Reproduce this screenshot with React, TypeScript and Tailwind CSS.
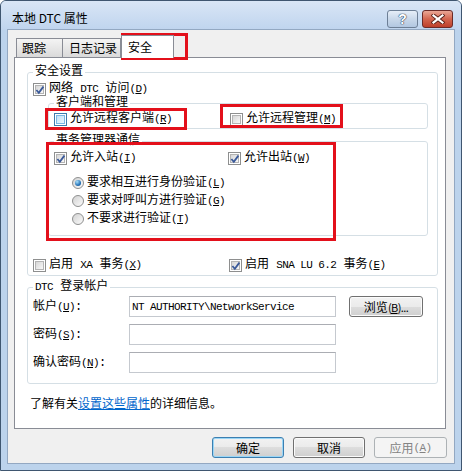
import type { ReactNode } from "react";

const sim = "font-['Liberation_Mono','Noto_Sans_CJK_SC',monospace] text-[12px] leading-[14px]";
const hei = "font-['Noto_Sans_CJK_SC','Liberation_Sans',sans-serif] text-[12px] leading-[14px]";

function M({ children }: { children: ReactNode }) {
  return <span className="text-[11px] tracking-[-0.6px]">{children}</span>;
}

function Key({ k }: { k: string }) {
  return (
    <span className="text-[11px] tracking-[-0.6px]">
      (<span className="underline underline-offset-1">{k}</span>)
    </span>
  );
}

function Box({ checked, hot }: { checked?: boolean; hot?: boolean }) {
  return (
    <span
      className={`relative flex h-[13px] w-[13px] shrink-0 items-center justify-center border bg-white ${
        hot ? "border-[#3d7bad]" : "border-[#8e8f8f]"
      }`}
    >
      <span
        className={`h-[9px] w-[9px] border ${
          hot
            ? "border-[#79b7e6] bg-gradient-to-br from-[#bfe2f8] to-[#eaf6fd]"
            : "border-[#b4b4b4] bg-gradient-to-br from-[#d6d6d6] to-[#f8f8f8]"
        }`}
      />
      {checked && (
        <svg className="absolute left-[1px] top-[1px]" width="10" height="10" viewBox="0 0 10 10">
          <path d="M1.4 5 L3.8 7.8 L8.4 1.6" fill="none" stroke="#3b5a9a" strokeWidth="1.8" />
        </svg>
      )}
    </span>
  );
}

function Radio({ on }: { on?: boolean }) {
  return (
    <span className="flex h-[12px] w-[12px] shrink-0 items-center justify-center rounded-full border border-[#8e8f8f] bg-gradient-to-br from-[#d2d2d2] to-[#fbfbfb]">
      {on && (
        <span className="h-[6px] w-[6px] rounded-full bg-[radial-gradient(circle_at_35%_30%,#a8e0fb,#2673b8_60%,#0d4a85)]" />
      )}
    </span>
  );
}

function Opt({ box, children, className = "" }: { box: ReactNode; children: ReactNode; className?: string }) {
  return (
    <div className={`flex h-[14px] items-center gap-[3px] ${className}`}>
      {box}
      <span className="whitespace-nowrap">{children}</span>
    </div>
  );
}

function Group({ title, className = "", children }: { title: ReactNode; className?: string; children: ReactNode }) {
  return (
    <fieldset className={`rounded-[3px] border border-[#d5dfe5] px-[5px] ${className}`}>
      <legend className="px-[2px] leading-[14px] whitespace-nowrap">{title}</legend>
      {children}
    </fieldset>
  );
}

function Btn({
  children,
  def,
  disabled,
  className = "",
}: {
  children: ReactNode;
  def?: boolean;
  disabled?: boolean;
  className?: string;
}) {
  const look = disabled
    ? "border-[#adb2b5] bg-[#f4f4f4] text-[#838383]"
    : def
    ? "border-[#3c7fb1] bg-[linear-gradient(#f2f2f2,#ebebeb_50%,#dddddd_50%,#cfcfcf)] shadow-[inset_0_0_0_1px_#9ad6f6] text-black"
    : "border-[#707070] bg-[linear-gradient(#f2f2f2,#ebebeb_50%,#dddddd_50%,#cfcfcf)] shadow-[inset_0_0_0_1px_#fbfbfb] text-black";
  return (
    <div className={`flex h-[21px] items-center justify-center rounded-[3px] border ${look} ${className}`}>
      {children}
    </div>
  );
}

function Field({ children }: { children?: ReactNode }) {
  return (
    <div className="flex h-[21px] w-[207px] items-center border border-[#c5c9cf] border-t-[#abadb3] bg-white pl-[2px]">
      {children}
    </div>
  );
}

function Red({ className }: { className: string }) {
  return <div className={`pointer-events-none absolute border-[3px] border-[#e3101b] ${className}`} />;
}

export default function App() {
  return (
    <div className="relative h-[471px] w-[462px] overflow-hidden rounded-t-[6px] border border-[#3f5670] bg-[#bcd3ec]">
      {/* title bar */}
      <div className="flex h-[29px] bg-gradient-to-b from-[#d9e6f6] to-[#bfd4ee] pl-[11px] pr-[8px]">
        <span className={`${hei} mt-[10px] text-black`}>本地 DTC 属性</span>
        <div className="ml-auto mt-[9px] flex gap-[4px]">
          <div className="flex h-[18px] w-[31px] items-center justify-center rounded-[3px] border border-[#6d7f96] bg-gradient-to-b from-[#e6eef8] via-[#c9d8ea] to-[#b2c7e1]">
            <span className="font-['Liberation_Sans',sans-serif] text-[14px] font-bold leading-[14px] text-white [text-shadow:0_0_1px_#2d3e56,0_0_1px_#2d3e56,0_0_1px_#2d3e56]">
              ?
            </span>
          </div>
          <div className="flex h-[18px] w-[31px] items-center justify-center rounded-[3px] border border-[#6b2b28] bg-gradient-to-b from-[#e9a796] via-[#d3654f] to-[#bd3f2b]">
            <svg width="14" height="10" viewBox="0 0 14 10">
              <path d="M2.5 1.5 L11.5 8.5 M11.5 1.5 L2.5 8.5" stroke="#5a2219" strokeWidth="4" strokeLinecap="square" />
              <path d="M2.5 1.5 L11.5 8.5 M11.5 1.5 L2.5 8.5" stroke="#ffffff" strokeWidth="2.2" strokeLinecap="square" />
            </svg>
          </div>
        </div>
      </div>

      {/* client area */}
      <div className="ml-[7px] h-[433px] w-[446px] bg-[#f0f0f0] shadow-[0_0_0_1px_#93a8c2]">
        {/* tabs */}
        <div className={`${hei} flex h-[27px] items-end pl-[8px] text-black`}>
          <div className="h-[19px] w-[47px] border border-b-0 border-[#898c95] bg-gradient-to-b from-[#f4f4f4] to-[#dadada] pl-[5px] leading-[18px]">
            跟踪
          </div>
          <div className="h-[19px] w-[58px] border border-b-0 border-l-0 border-[#898c95] bg-gradient-to-b from-[#f4f4f4] to-[#dadada] pl-[6px] leading-[18px]">
            日志记录
          </div>
          <div className="relative z-10 -mb-px h-[23px] w-[53px] border border-b-0 border-[#898c95] bg-white pl-[6px] leading-[22px]">
            安全
          </div>
        </div>

        {/* tab panel */}
        <div className={`relative ml-[6px] h-[372px] w-[432px] border border-[#898c95] bg-white text-black ${sim}`}>
          <Group title="安全设置" className="ml-[12px] mt-[7px] w-[411px] pb-[3px]">
            <Opt className="mt-[3px]" box={<Box checked />}>
              网络 <M>DTC</M> 访问<Key k="D" />
            </Opt>
            <Group title="客户端和管理" className="ml-[15px] w-[380px] pb-[2px]">
              <div className="mt-[2px] flex">
                <Opt className="w-[176px]" box={<Box hot />}>
                  允许远程客户端<Key k="R" />
                </Opt>
                <Opt box={<Box />}>
                  允许远程管理<Key k="M" />
                </Opt>
              </div>
            </Group>
            <Group title="事务管理器通信" className="ml-[15px] mt-[5px] w-[380px] pb-[9px]">
              <div className="mt-[3px] flex">
                <Opt className="w-[174px]" box={<Box checked />}>
                  允许入站<Key k="I" />
                </Opt>
                <Opt box={<Box checked />}>
                  允许出站<Key k="W" />
                </Opt>
              </div>
              <div className="ml-[18px] mt-[11px] flex flex-col gap-[4px]">
                <Opt box={<Radio on />}>
                  要求相互进行身份验证<Key k="L" />
                </Opt>
                <Opt box={<Radio />}>
                  要求对呼叫方进行验证<Key k="G" />
                </Opt>
                <Opt box={<Radio />}>
                  不要求进行验证<Key k="T" />
                </Opt>
              </div>
            </Group>
            <div className="mt-[22px] flex">
              <Opt className="w-[196px]" box={<Box />}>
                启用 <M>XA</M> 事务<Key k="X" />
              </Opt>
              <Opt box={<Box checked />}>
                启用 <M>SNA LU 6.2</M> 事务<Key k="E" />
              </Opt>
            </div>
          </Group>

          <Group
            title={
              <>
                <M>DTC</M> 登录帐户
              </>
            }
            className="ml-[12px] mt-[4px] w-[411px] pb-[10px]"
          >
            <div className="mt-[2px] flex flex-col gap-[7px]">
              <div className="flex items-center">
                <span className="w-[96px]">
                  帐户<Key k="U" />:
                </span>
                <Field>
                  <M>NT AUTHORITY\NetworkService</M>
                </Field>
                <Btn className={`${hei} ml-[13px] w-[74px]`}>
                  浏览<Key k="B" />
                  <M>...</M>
                </Btn>
              </div>
              <div className="flex items-center">
                <span className="w-[96px]">
                  密码<Key k="S" />:
                </span>
                <Field />
              </div>
              <div className="flex items-center">
                <span className="w-[96px]">
                  确认密码<Key k="N" />:
                </span>
                <Field />
              </div>
            </div>
          </Group>

          <p className={`${hei} ml-[15px] mt-[12px]`}>
            了解有关<span className="text-[#0066cc] underline">设置这些属性</span>的详细信息。
          </p>
        </div>

        {/* dialog buttons */}
        <div className={`${hei} mt-[8px] flex justify-end gap-[9px] pr-[7px]`}>
          <Btn def className="w-[72px]">
            确定
          </Btn>
          <Btn className="w-[72px]">取消</Btn>
          <Btn disabled className="w-[73px]">
            应用<span className="font-['Liberation_Mono',monospace] text-[11px] tracking-[-0.6px]">(<span className="underline">A</span>)</span>
          </Btn>
        </div>
      </div>

      {/* annotation boxes */}
      <Red className="left-[120px] top-[32px] h-[27px] w-[67px]" />
      <Red className="left-[44px] top-[107px] h-[22px] w-[142px]" />
      <Red className="left-[219px] top-[103px] h-[24px] w-[123px]" />
      <Red className="left-[45px] top-[141px] h-[99px] w-[290px]" />
    </div>
  );
}
